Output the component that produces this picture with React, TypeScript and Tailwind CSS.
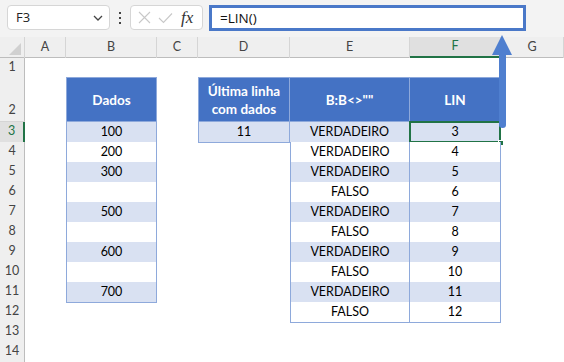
import React from "react";

type Kind = "none" | "head" | "light" | "white";
type C = { t?: string; k: Kind; l?: boolean; top?: boolean; r?: boolean; sel?: boolean };

const E: C = { k: "none" };

const rows: { n: number; h: string; cells: C[] }[] = [
  { n: 1, h: "h-[19px]", cells: [E, E, E, E, E, E, E] },
  {
    n: 2,
    h: "h-[45px]",
    cells: [
      E,
      { t: "Dados", k: "head", l: true, top: true },
      E,
      { t: "Última linha\ncom dados", k: "head", l: true, top: true },
      { t: 'B:B<>""', k: "head", top: true },
      { t: "LIN", k: "head", top: true },
      E,
    ],
  },
  {
    n: 3,
    h: "h-[20px]",
    cells: [
      E,
      { t: "100", k: "light", l: true },
      E,
      { t: "11", k: "light", l: true },
      { t: "VERDADEIRO", k: "light" },
      { t: "3", k: "light", sel: true },
      E,
    ],
  },
  { n: 4, h: "h-[20px]", cells: [E, { t: "200", k: "white", l: true }, E, E, { t: "VERDADEIRO", k: "white", l: true }, { t: "4", k: "white" }, E] },
  { n: 5, h: "h-[20px]", cells: [E, { t: "300", k: "light", l: true }, E, E, { t: "VERDADEIRO", k: "light", l: true }, { t: "5", k: "light" }, E] },
  { n: 6, h: "h-[20px]", cells: [E, { t: "", k: "white", l: true }, E, E, { t: "FALSO", k: "white", l: true }, { t: "6", k: "white" }, E] },
  { n: 7, h: "h-[20px]", cells: [E, { t: "500", k: "light", l: true }, E, E, { t: "VERDADEIRO", k: "light", l: true }, { t: "7", k: "light" }, E] },
  { n: 8, h: "h-[20px]", cells: [E, { t: "", k: "white", l: true }, E, E, { t: "FALSO", k: "white", l: true }, { t: "8", k: "white" }, E] },
  { n: 9, h: "h-[20px]", cells: [E, { t: "600", k: "light", l: true }, E, E, { t: "VERDADEIRO", k: "light", l: true }, { t: "9", k: "light" }, E] },
  { n: 10, h: "h-[20px]", cells: [E, { t: "", k: "white", l: true }, E, E, { t: "FALSO", k: "white", l: true }, { t: "10", k: "white" }, E] },
  { n: 11, h: "h-[20px]", cells: [E, { t: "700", k: "light", l: true }, E, E, { t: "VERDADEIRO", k: "light", l: true }, { t: "11", k: "light" }, E] },
  { n: 12, h: "h-[20px]", cells: [E, E, E, E, { t: "FALSO", k: "white", l: true }, { t: "12", k: "white" }, E] },
  { n: 13, h: "h-[20px]", cells: [E, E, E, E, E, E, E] },
  { n: 14, h: "h-[20px]", cells: [E, E, E, E, E, E, E] },
];

const cols = ["A", "B", "C", "D", "E", "F", "G"];

function Cell({ c }: { c: C }) {
  if (c.k === "none") return <div />;
  const bg =
    c.k === "head"
      ? "bg-[#4472C4] text-white font-bold text-[13.5px] leading-[18px]"
      : c.k === "light"
      ? "bg-[#D9E1F2] text-black text-[12.5px]"
      : "bg-white text-black text-[12.5px]";
  return (
    <div
      className={`relative flex items-center justify-center text-center whitespace-pre-line border-r border-b border-[#8EA9DB] ${bg} ${
        c.l ? "border-l" : ""
      } ${c.top ? "border-t" : ""}`}
    >
      {c.t}
      {c.sel && (
        <>
          <div className="absolute -left-px -top-px -right-px -bottom-px border-2 border-[#217346]" />
          <div className="absolute -right-[4px] -bottom-[4px] w-[6px] h-[6px] bg-[#217346] border border-white" />
        </>
      )}
    </div>
  );
}

export default function App() {
  return (
    <div
      className="relative w-[564px] h-[362px] overflow-hidden bg-white"
      style={{ fontFamily: "Lato, 'Open Sans', sans-serif" }}
    >
      {/* Toolbar */}
      <div
        className="h-[37px] bg-[#F3F3F3] flex items-start pt-[5px] pl-[7px] gap-0"
        style={{ fontFamily: "'Open Sans', 'Noto Sans', sans-serif" }}
      >
        <div className="w-[103px] h-[25px] bg-white border border-[#D6D6D6] rounded-[4px] flex items-center justify-between pl-[8px] pr-[6px] text-[13px] text-[#222]">
          <span>F3</span>
          <svg width="10" height="6" viewBox="0 0 10 6">
            <path d="M1 1 L5 5 L9 1" fill="none" stroke="#444" strokeWidth="1.3" />
          </svg>
        </div>
        <div className="w-[20px] h-[25px] flex flex-col items-center justify-center gap-[3px]">
          <div className="w-[2px] h-[2px] bg-[#444]" />
          <div className="w-[2px] h-[2px] bg-[#444]" />
          <div className="w-[2px] h-[2px] bg-[#444]" />
        </div>
        <div className="w-[73px] h-[25px] bg-white border border-[#D6D6D6] rounded-[4px] flex items-center pl-[7px] gap-[7px]">
          <svg width="13" height="13" viewBox="0 0 13 13">
            <path d="M1 1 L12 12 M12 1 L1 12" stroke="#C8C8C8" strokeWidth="1.1" />
          </svg>
          <svg width="15" height="12" viewBox="0 0 15 12">
            <path d="M1 6 L5.5 10.5 L14 1.5" fill="none" stroke="#C8C8C8" strokeWidth="1.1" />
          </svg>
          <span
            className="italic text-[17px] text-[#333] ml-[1px] leading-none"
            style={{ fontFamily: "'Liberation Serif', serif" }}
          >
            fx
          </span>
        </div>
        <div className="ml-[6px] w-[317px] h-[26px] bg-white border-[3px] border-[#4A78C8] flex items-center pl-[8px] text-[13.5px] text-[#111]">
          =LIN()
        </div>
      </div>

      {/* Column header row */}
      <div className="grid grid-cols-[25px_41px_91px_41px_92px_120px_91px_63px] h-[21px] bg-[#EFEFEF] border-b border-[#BDBDBD] text-[12.5px] text-[#444]">
        <div className="relative border-r border-[#D5D5D5]">
          <svg className="absolute right-[3px] bottom-[3px]" width="12" height="12" viewBox="0 0 12 12">
            <path d="M12 0 L12 12 L0 12 Z" fill="#D0D0D0" />
          </svg>
        </div>
        {cols.map((c) =>
          c === "F" ? (
            <div key={c} className="flex items-center justify-center bg-[#E0E0E0] border-r border-[#D5D5D5] border-b-2 border-b-[#217346] text-[#217346]">
              {c}
            </div>
          ) : (
            <div key={c} className="flex items-center justify-center border-r border-[#D5D5D5]">
              {c}
            </div>
          )
        )}
      </div>

      {/* Rows */}
      {rows.map((r) => (
        <div key={r.n} className={`grid grid-cols-[25px_41px_91px_41px_92px_120px_91px_63px] ${r.h}`}>
          {r.n === 3 ? (
            <div className="flex items-end justify-center pb-[1px] bg-[#E0E0E0] border-b border-[#D5D5D5] border-r-2 border-r-[#217346] text-[#217346] text-[12.5px]">
              {r.n}
            </div>
          ) : (
            <div className="flex items-end justify-center pb-[1px] bg-[#EFEFEF] border-b border-[#D5D5D5] border-r border-r-[#BDBDBD] text-[#444] text-[12.5px]">
              {r.n}
            </div>
          )}
          {r.cells.map((c, i) => (
            <Cell key={i} c={c} />
          ))}
        </div>
      ))}

      {/* Arrow overlay */}
      <svg className="absolute left-[490px] top-[33px]" width="24" height="100" viewBox="0 0 24 100">
        <path d="M2 22 L12 2 L22 22 Z" fill="#4F7FCF" />
        <path d="M9 21 L16 21 L16 92 Q16 95 12.5 95 Q9 95 9 92 Z" fill="#4F7FCF" />
      </svg>
    </div>
  );
}
